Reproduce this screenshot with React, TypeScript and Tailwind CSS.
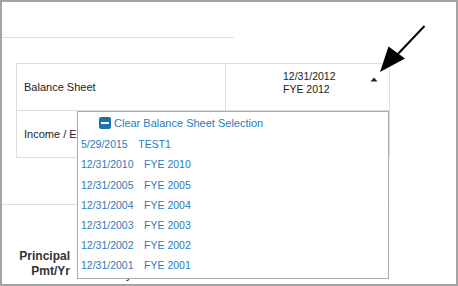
import React from 'react';

const ITEMS = [
  { date: '5/29/2015', name: 'TEST1' },
  { date: '12/31/2010', name: 'FYE 2010' },
  { date: '12/31/2005', name: 'FYE 2005' },
  { date: '12/31/2004', name: 'FYE 2004' },
  { date: '12/31/2003', name: 'FYE 2003' },
  { date: '12/31/2002', name: 'FYE 2002' },
  { date: '12/31/2001', name: 'FYE 2001' },
];

const App: React.FC = () => {
  return (
    <div className="relative w-[458px] h-[286px] overflow-hidden border-2 border-[#a3a3a3] bg-white font-['Liberation_Sans',Arial,sans-serif] text-[#222]">
      {/* top section divider */}
      <div className="h-[36px] w-[232px] border-b border-[#dcdcdc]" />

      {/* statements table */}
      <div className="ml-[14px] mt-[25px] w-[374px] border border-[#dddddd]">
        <div className="flex h-[47px] border-b border-[#dddddd]">
          <div className="w-[208px] flex items-center pl-[7px] pt-[1px] text-[11px]">Balance Sheet</div>
          <div className="flex-1 flex border-l border-[#dddddd]">
            <div className="pl-[57px] pt-[6px] text-[10.5px] leading-[13px]">
              <div>12/31/2012</div>
              <div>FYE 2012</div>
            </div>
            <svg className="ml-auto mr-[11px] mt-[13px]" width="8" height="5" viewBox="0 0 8 5">
              <polygon points="0.5,4.5 4,0.5 7.5,4.5" fill="#222" />
            </svg>
          </div>
        </div>
        <div className="flex h-[46px]">
          <div className="w-[208px] flex items-center pl-[7px] text-[11px]">Income / Expense</div>
          <div className="flex-1 border-l border-[#dddddd]" />
        </div>
      </div>

      <div className="mt-[46px] w-[388px] border-t border-[#dddddd]" />

      {/* loan terms */}
      <div className="mt-[44px] flex text-[12px] leading-[15px]">
        <div className="w-[68px] text-right font-bold text-[#333]">
          <div>Principal</div>
          <div>Pmt/Yr</div>
        </div>
        <div className="self-end mb-[-3px] pl-[20px] text-[#333]">Monthly</div>
      </div>

      {/* open dropdown */}
      <div className="absolute left-[75px] top-[109px] w-[312px] h-[168px] border border-[#ababab] bg-white text-[10.5px] text-[#2b7bbd]">
        <div className="flex h-[23px] items-center pl-[21px] pb-[1px]">
          <span className="mr-[3px] flex h-[12px] w-[12px] items-center justify-center rounded-[2px] bg-[#1a71ad]">
            <span className="h-[2px] w-[8px] bg-white" />
          </span>
          <span className="text-[11px]">Clear Balance Sheet Selection</span>
        </div>
        {ITEMS.map((item) => (
          <div key={item.date} className="flex h-[20.2px] items-center pl-[3px]">
            <span>{item.date}</span>
            <span className="ml-[10.5px]">{item.name}</span>
          </div>
        ))}
      </div>

      {/* annotation arrow */}
      <svg className="pointer-events-none absolute left-[-2px] top-[-2px]" width="458" height="286" viewBox="0 0 458 286">
        <line x1="424.5" y1="26" x2="396" y2="56" stroke="#000" strokeWidth="2" />
        <polygon points="380,72 388.5,46.5 405,58.5" fill="#000" />
      </svg>
    </div>
  );
};

export default App;
